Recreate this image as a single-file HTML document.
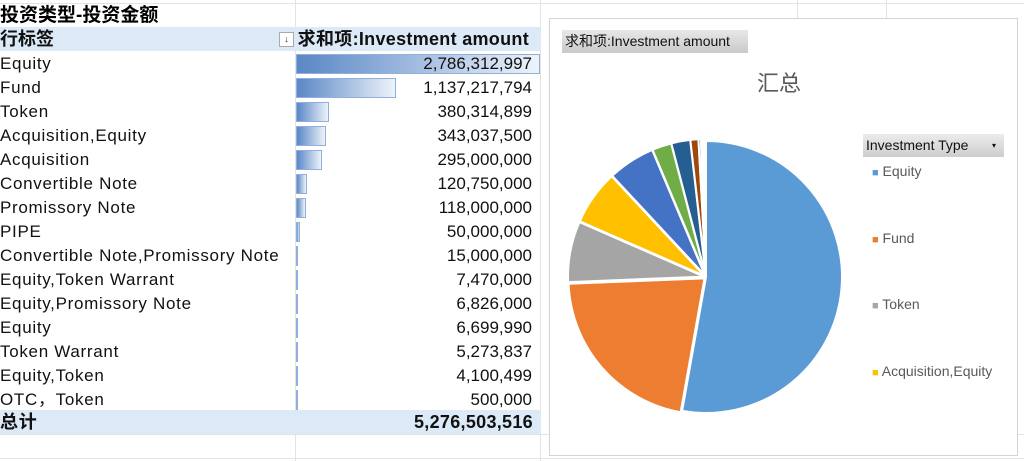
<!DOCTYPE html><html><head><meta charset="utf-8"><style>
body{margin:0;width:1024px;height:461px;overflow:hidden;background:#fff;font-family:"Liberation Sans","Noto Sans CJK SC",sans-serif;position:relative}
.a{position:absolute}
.r{position:absolute;left:0;width:540px;height:24px;font-size:17px;line-height:24px;color:#111}
.r .l{position:absolute;left:0;letter-spacing:0.7px}
.r .v{position:absolute;right:8px}
.bar{position:absolute;left:296px;top:2px;height:20px;background:linear-gradient(90deg,#5a87c6,#eef3fa);border:1px solid #8fb0dc;box-sizing:border-box}
.gl{position:absolute;background:#e3e3e3}
</style></head><body>
<div class="gl" style="left:295px;top:0;width:1px;height:461px"></div>
<div class="gl" style="left:540px;top:0;width:1px;height:461px"></div>
<div class="gl" style="left:0;top:434px;width:1024px;height:1px"></div>
<div class="gl" style="left:0;top:458px;width:1024px;height:1px"></div>
<div class="gl" style="left:0;top:3px;width:1024px;height:1px"></div>
<div class="gl" style="left:797px;top:0;width:1px;height:18px"></div>
<div class="gl" style="left:886px;top:0;width:1px;height:18px"></div>
<div class="a" style="left:0;top:4px;font-size:19px;font-weight:bold;line-height:24px">投资类型-投资金额</div>
<div class="r" style="top:27px;background:#dce9f6;font-weight:bold;width:541px;font-size:18px"><span class="l" style="letter-spacing:0">行标签</span><span class="a" style="left:279px;top:5px;width:13px;height:13px;border:1px solid #aaa;background:#fff;font-size:9px;line-height:13px;text-align:center;font-weight:normal">↓</span><span class="v" style="right:12px;letter-spacing:0.3px">求和项:Investment amount</span></div>
<div id="rows"></div>
<div class="r" style="top:410px;background:#dce9f6;font-weight:bold;width:541px;font-size:18px"><span class="l">总计</span><span class="v" style="letter-spacing:0.3px">5,276,503,516</span></div>
<div class="a" style="left:549px;top:18px;width:467px;height:436px;border:1px solid #d4d4d4;background:#fff"></div>
<div class="a" style="left:562px;top:30px;width:186px;height:23px;background:linear-gradient(#e8e8e8,#c9c9c9);font-size:14px;line-height:23px;padding-left:3px;box-sizing:border-box;color:#111">求和项:Investment amount</div>
<div class="a" style="left:757px;top:66px;font-size:22px;color:#595959">汇总</div>
<div class="a" style="left:863px;top:134px;width:141px;height:23px;background:linear-gradient(#ececec,#cdcdcd);font-size:14px;line-height:23px;padding-left:3px;box-sizing:border-box;color:#111">Investment Type<span style="position:absolute;right:8px;font-size:8px">▾</span></div>
<div class="a" style="left:872px;top:163px;font-size:14px;color:#595959;line-height:16px">
<div style="position:absolute;top:0;white-space:nowrap"><span style="color:#5B9BD5;font-size:11px">■</span> Equity</div>
<div style="position:absolute;top:67px;white-space:nowrap"><span style="color:#ED7D31;font-size:11px">■</span> Fund</div>
<div style="position:absolute;top:133px;white-space:nowrap"><span style="color:#A5A5A5;font-size:11px">■</span> Token</div>
<div style="position:absolute;top:200px;white-space:nowrap"><span style="color:#FFC000;font-size:11px">■</span> Acquisition,Equity</div>
</div>
<svg class="a" style="left:0;top:0" width="1024" height="461" id="pie"></svg>
<script>
var d=[["Equity",2786312997],["Fund",1137217794],["Token",380314899],["Acquisition,Equity",343037500],["Acquisition",295000000],["Convertible Note",120750000],["Promissory Note",118000000],["PIPE",50000000],["Convertible Note,Promissory Note",15000000],["Equity,Token Warrant",7470000],["Equity,Promissory Note",6826000],["Equity",6699990],["Token Warrant",5273837],["Equity,Token",4100499],["OTC，Token",500000]];
var h="";d.forEach(function(x,i){var w=Math.max(1,244*x[1]/2786312997);h+='<div class="r" style="top:'+(52+24*i)+'px"><div class="bar" style="width:'+w+'px"></div><span class="l">'+x[0]+'</span><span class="v">'+x[1].toLocaleString("en-US")+'</span></div>';});
document.getElementById("rows").innerHTML=h;
var c=["#5B9BD5","#ED7D31","#A5A5A5","#FFC000","#4472C4","#70AD47","#255E91","#9E480E","#636363","#997300","#264478","#43682B","#7CAFDD","#F1975A","#B7B7B7"];
var T=5276503516,a=0,s="",cx=706,cy=277,R=136;
d.forEach(function(x,i){var f=x[1]/T,a2=a+f*2*Math.PI;var m=(a+a2)/2,e=i==0?0:2;var ox=cx+e*Math.sin(m),oy=cy-e*Math.cos(m);
var x1=ox+R*Math.sin(a),y1=oy-R*Math.cos(a),x2=ox+R*Math.sin(a2),y2=oy-R*Math.cos(a2);
s+='<path d="M'+ox+' '+oy+'L'+x1+' '+y1+'A'+R+' '+R+' 0 '+(f>0.5?1:0)+' 1 '+x2+' '+y2+'Z" fill="'+c[i]+'" stroke="#fff" stroke-width="2"/>';a=a2;});
document.getElementById("pie").innerHTML=s;
</script>
</body></html>
